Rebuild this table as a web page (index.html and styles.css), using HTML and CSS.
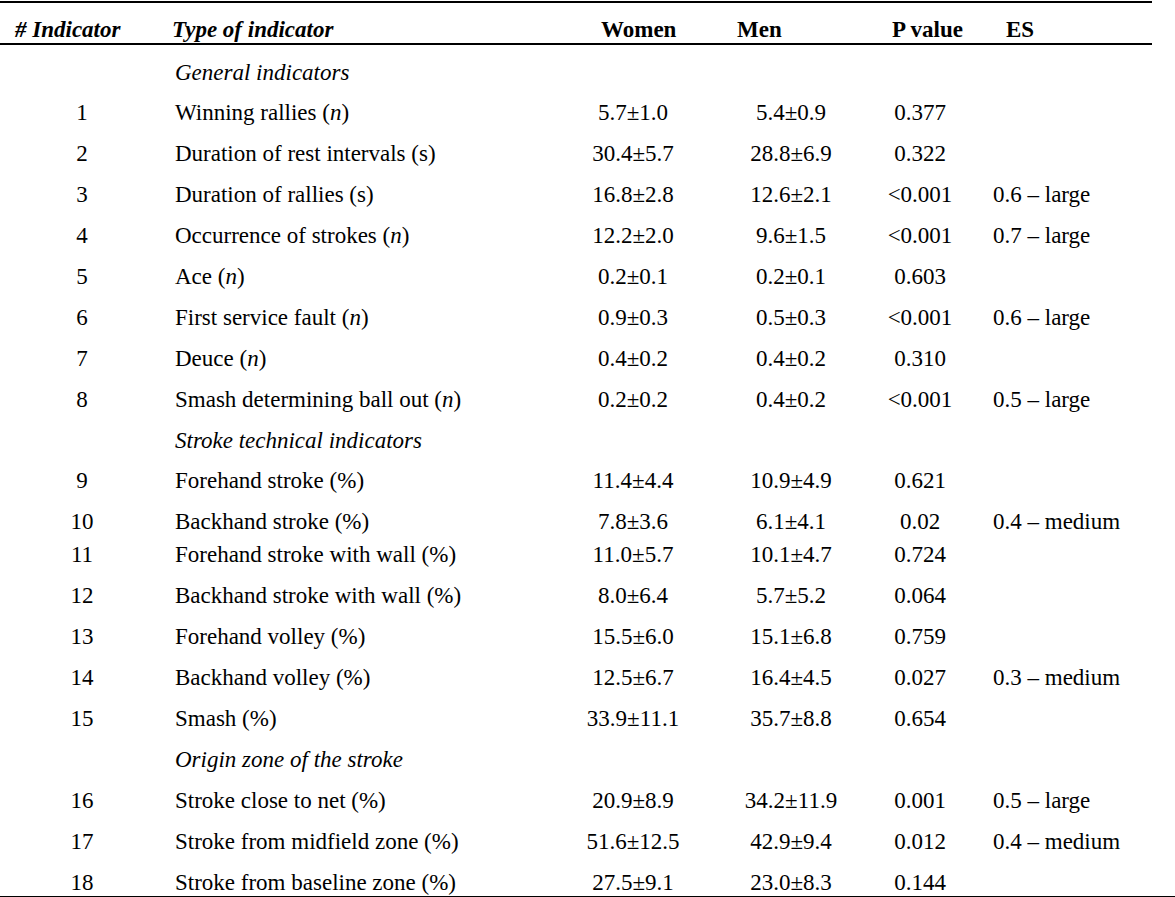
FILE: index.html
```html
<!DOCTYPE html>
<html lang="en">
<head>
<meta charset="utf-8">
<title>Indicators by sex</title>
<link rel="stylesheet" href="styles.css">
</head>
<body>
<div class="sheet">
<table class="data">
  <colgroup>
    <col class="c-num"><col class="c-type"><col class="c-women"><col class="c-men"><col class="c-p"><col class="c-es">
  </colgroup>
  <thead>
    <tr>
      <th class="h-num"># Indicator</th>
      <th class="h-type">Type of indicator</th>
      <th class="h-women">Women</th>
      <th class="h-men">Men</th>
      <th class="h-p">P value</th>
      <th class="h-es">ES</th>
    </tr>
  </thead>
  <tbody>
    <tr class="section"><td></td><td class="type">General indicators</td><td></td><td></td><td></td><td></td></tr>
    <tr><td class="num">1</td><td class="type">Winning rallies (<i>n</i>)</td><td class="val">5.7±1.0</td><td class="val">5.4±0.9</td><td class="val">0.377</td><td class="es"></td></tr>
    <tr><td class="num">2</td><td class="type">Duration of rest intervals (s)</td><td class="val">30.4±5.7</td><td class="val">28.8±6.9</td><td class="val">0.322</td><td class="es"></td></tr>
    <tr><td class="num">3</td><td class="type">Duration of rallies (s)</td><td class="val">16.8±2.8</td><td class="val">12.6±2.1</td><td class="val">&lt;0.001</td><td class="es">0.6 – large</td></tr>
    <tr><td class="num">4</td><td class="type">Occurrence of strokes (<i>n</i>)</td><td class="val">12.2±2.0</td><td class="val">9.6±1.5</td><td class="val">&lt;0.001</td><td class="es">0.7 – large</td></tr>
    <tr><td class="num">5</td><td class="type">Ace (<i>n</i>)</td><td class="val">0.2±0.1</td><td class="val">0.2±0.1</td><td class="val">0.603</td><td class="es"></td></tr>
    <tr><td class="num">6</td><td class="type">First service fault (<i>n</i>)</td><td class="val">0.9±0.3</td><td class="val">0.5±0.3</td><td class="val">&lt;0.001</td><td class="es">0.6 – large</td></tr>
    <tr><td class="num">7</td><td class="type">Deuce (<i>n</i>)</td><td class="val">0.4±0.2</td><td class="val">0.4±0.2</td><td class="val">0.310</td><td class="es"></td></tr>
    <tr><td class="num">8</td><td class="type">Smash determining ball out (<i>n</i>)</td><td class="val">0.2±0.2</td><td class="val">0.4±0.2</td><td class="val">&lt;0.001</td><td class="es">0.5 – large</td></tr>
    <tr class="section"><td></td><td class="type">Stroke technical indicators</td><td></td><td></td><td></td><td></td></tr>
    <tr><td class="num">9</td><td class="type">Forehand stroke (%)</td><td class="val">11.4±4.4</td><td class="val">10.9±4.9</td><td class="val">0.621</td><td class="es"></td></tr>
    <tr><td class="num">10</td><td class="type">Backhand stroke (%)</td><td class="val">7.8±3.6</td><td class="val">6.1±4.1</td><td class="val">0.02</td><td class="es">0.4 – medium</td></tr>
    <tr class="tight"><td class="num">11</td><td class="type">Forehand stroke with wall (%)</td><td class="val">11.0±5.7</td><td class="val">10.1±4.7</td><td class="val">0.724</td><td class="es"></td></tr>
    <tr><td class="num">12</td><td class="type">Backhand stroke with wall (%)</td><td class="val">8.0±6.4</td><td class="val">5.7±5.2</td><td class="val">0.064</td><td class="es"></td></tr>
    <tr><td class="num">13</td><td class="type">Forehand volley (%)</td><td class="val">15.5±6.0</td><td class="val">15.1±6.8</td><td class="val">0.759</td><td class="es"></td></tr>
    <tr><td class="num">14</td><td class="type">Backhand volley (%)</td><td class="val">12.5±6.7</td><td class="val">16.4±4.5</td><td class="val">0.027</td><td class="es">0.3 – medium</td></tr>
    <tr><td class="num">15</td><td class="type">Smash (%)</td><td class="val">33.9±11.1</td><td class="val">35.7±8.8</td><td class="val">0.654</td><td class="es"></td></tr>
    <tr class="section"><td></td><td class="type">Origin zone of the stroke</td><td></td><td></td><td></td><td></td></tr>
    <tr><td class="num">16</td><td class="type">Stroke close to net (%)</td><td class="val">20.9±8.9</td><td class="val">34.2±11.9</td><td class="val">0.001</td><td class="es">0.5 – large</td></tr>
    <tr><td class="num">17</td><td class="type">Stroke from midfield zone (%)</td><td class="val">51.6±12.5</td><td class="val">42.9±9.4</td><td class="val">0.012</td><td class="es">0.4 – medium</td></tr>
    <tr><td class="num">18</td><td class="type">Stroke from baseline zone (%)</td><td class="val">27.5±9.1</td><td class="val">23.0±8.3</td><td class="val">0.144</td><td class="es"></td></tr>
  </tbody>
</table>
</div>
</body>
</html>
```

FILE: styles.css
```css
html, body {
  margin: 0;
  padding: 0;
  background: #ffffff;
}

body {
  font-family: "Liberation Serif", "Times New Roman", serif;
  font-size: 23px;
  color: #000000;
}

.sheet {
  width: 1175px;
  border-bottom: 2px solid #000000;
}

.data {
  width: 1152px;
  table-layout: fixed;
  border-collapse: collapse;
  border-spacing: 0;
  margin-top: 1px;
  border-top: 2px solid #000000;
}

.c-num { width: 164px; }
.c-type { width: 396px; }
.c-women { width: 146px; }
.c-men { width: 170px; }
.c-p { width: 88px; }
.c-es { width: 188px; }

.data th,
.data td {
  padding: 0;
  line-height: 26px;
  white-space: nowrap;
  vertical-align: top;
}

.data thead tr {
  border-bottom: 2px solid #000000;
}

.data th {
  font-weight: bold;
  text-align: left;
  padding-top: 13.5px;
  padding-bottom: 0.5px;
}

.data .h-num { font-style: italic; padding-left: 15px; }
.data .h-type { font-style: italic; padding-left: 8px; }
.data .h-women { padding-left: 41px; }
.data .h-men { padding-left: 31px; }
.data .h-p { padding-left: 16px; }
.data .h-es { padding-left: 42px; }

.data td {
  padding-top: 14.5px;
  padding-bottom: 0.4px;
}

.data tr.tight td {
  padding-top: 6.7px;
}

.data .num { text-align: center; }
.data .type { padding-left: 11px; }
.data .section .type { font-style: italic; }
.data .val { text-align: center; }
.data .es { padding-left: 29px; }
```
